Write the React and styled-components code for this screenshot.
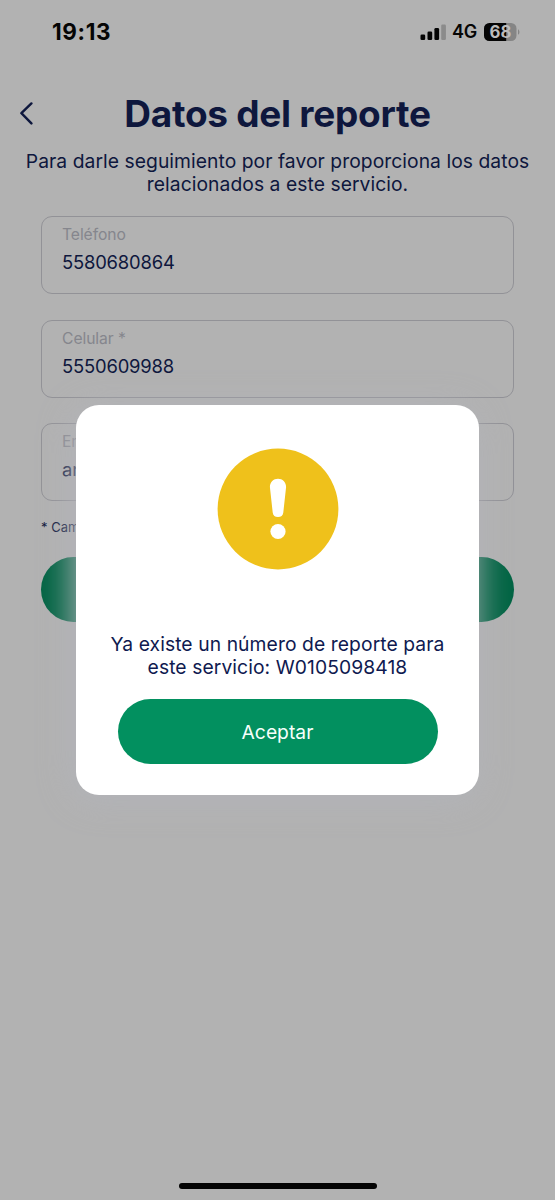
import styled, { createGlobalStyle } from "styled-components";

const GlobalStyle = createGlobalStyle`
    * {
        box-sizing: border-box;
    }

    body {
        margin: 0;
        background: #b2b2b2;
        font-family: Inter, "Liberation Sans", sans-serif;
    }
`;

const Screen = styled.div`
    position: relative;
    display: flex;
    flex-direction: column;
    width: 555px;
    height: 1200px;
    overflow: hidden;
    background: #b2b2b2;
    color: #0e173d;
`;

const StatusBar = styled.div`
    display: flex;
    align-items: center;
    justify-content: space-between;
    height: 64px;
    padding: 0 35px 0 52px;
    color: #050505;
`;

const Clock = styled.span`
    font-size: 22.5px;
    font-weight: 700;
    line-height: 26px;
    letter-spacing: 0.6px;
`;

const StatusIcons = styled.div`
    display: flex;
    align-items: center;
`;

const Network = styled.span`
    width: 32px;
    margin-left: 6px;
    font-size: 18px;
    font-weight: 600;
    line-height: 22px;
    letter-spacing: -0.2px;
`;

const Header = styled.header`
    display: grid;
    grid-template-columns: 54px 1fr 54px;
    align-items: center;
    height: 100px;
    margin-bottom: -14px;

    svg {
        margin-left: 19px;
    }
`;

const Title = styled.h1`
    margin: 0;
    text-align: center;
    font-size: 37px;
    font-weight: 700;
    line-height: 44px;
    letter-spacing: -0.27px;
    white-space: nowrap;
`;

const Subtitle = styled.p`
    margin: 0 0 20px;
    text-align: center;
    font-size: 19.3px;
    line-height: 23px;
    letter-spacing: 0.05px;
    white-space: nowrap;
`;

const Form = styled.main`
    display: flex;
    flex-direction: column;
    padding: 0 41px;
`;

const FieldBox = styled.div`
    display: flex;
    flex-direction: column;
    height: 78px;
    margin-bottom: 25.7px;
    padding: 8px 20px 6px;
    border: 1px solid #929297;
    border-radius: 11px;
`;

const FieldLabel = styled.label`
    color: #85868d;
    font-size: 15.7px;
    line-height: 20px;
    letter-spacing: -0.08px;
`;

const FieldValue = styled.span`
    margin-top: 5px;
    font-size: 18.4px;
    line-height: 24px;
    letter-spacing: -0.18px;
`;

const Note = styled.p`
    margin: -8px 0 22px;
    font-size: 13px;
    line-height: 16px;
`;

const SubmitButton = styled.button`
    height: 65px;
    border: 0;
    border-radius: 33px;
    background: #006443;
`;

const Overlay = styled.div`
    position: absolute;
    inset: 0;
    display: flex;
    align-items: center;
    justify-content: center;
`;

const Dialog = styled.section`
    display: flex;
    flex-direction: column;
    align-items: center;
    width: 403px;
    height: 390px;
    padding-top: 43px;
    border-radius: 23px;
    background: #fff;
    box-shadow: -3px 4px 34px 1px rgba(178, 179, 185, 0.95);
`;

const Message = styled.p`
    margin: 63px 0 20.4px;
    color: #0f1a50;
    text-align: center;
    font-size: 19.3px;
    line-height: 23px;
    letter-spacing: 0.08px;
    white-space: nowrap;
`;

const AcceptButton = styled.button`
    width: 320px;
    height: 65px;
    padding: 0;
    border: 0;
    border-radius: 33px;
    background: #02905f;
    color: #f5fffb;
    font-family: inherit;
    font-size: 19.3px;
`;

const HomeIndicator = styled.div`
    width: 198px;
    height: 6px;
    margin: auto auto 11px;
    border-radius: 3px;
    background: #030303;
`;

const SignalIcon = () => (
    <svg width="26" height="17" viewBox="0 0 26 17" fill="#050505">
        <rect x="0.5" y="10.5" width="4.7" height="5.5" rx="1.3" />
        <rect x="7.5" y="7.5" width="4.7" height="8.5" rx="1.3" />
        <rect x="14.4" y="4" width="4.7" height="12" rx="1.3" />
        <rect x="21.2" y="0.5" width="4.7" height="15.5" rx="1.3" fill="#8b8b8b" />
    </svg>
);

const BatteryIcon = () => (
    <svg width="36" height="18" viewBox="0 0 36 18">
        <defs>
            <clipPath id="battery-level">
                <rect width="22.2" height="18" />
            </clipPath>
        </defs>
        <rect width="32.5" height="18" rx="5.5" fill="#858585" />
        <rect width="32.5" height="18" rx="5.5" fill="#050505" clipPath="url(#battery-level)" />
        <path d="M34 6.2C35.9 7.2 35.9 10.8 34 11.8Z" fill="#858585" />
        <text
            x="16.4"
            y="14.8"
            textAnchor="middle"
            fill="#bcbcbc"
            fontFamily="Inter, sans-serif"
            fontSize="16.8"
            fontWeight="700"
        >
            68
        </text>
    </svg>
);

const BackIcon = () => (
    <svg width="16" height="24" viewBox="0 0 16 24" fill="none">
        <path
            d="M12.4 1.4L2.4 11.2L12.4 21.4"
            stroke="#0e173d"
            strokeWidth="2.4"
            strokeLinecap="round"
            strokeLinejoin="round"
        />
    </svg>
);

const WarningIcon = () => (
    <svg width="122" height="122" viewBox="0 0 122 122">
        <circle cx="61" cy="61" r="60.4" fill="#efc11b" />
        <path
            d="M52.9 39C52.9 34.3 56.5 30.8 61 30.8S69.1 34.3 69.1 39L66.3 64.5C66 67.5 64 69 61 69S56 67.5 55.7 64.5Z"
            fill="#fff"
        />
        <circle cx="61" cy="83.5" r="7.6" fill="#fff" />
    </svg>
);

const Field = ({ label, value }) => (
    <FieldBox>
        <FieldLabel>{label}</FieldLabel>
        <FieldValue>{value}</FieldValue>
    </FieldBox>
);

const App = () => {
    return (
        <>
            <GlobalStyle />
            <Screen>
                <StatusBar>
                    <Clock>19:13</Clock>
                    <StatusIcons>
                        <SignalIcon />
                        <Network>4G</Network>
                        <BatteryIcon />
                    </StatusIcons>
                </StatusBar>

                <Header>
                    <BackIcon />
                    <Title>Datos del reporte</Title>
                </Header>

                <Subtitle>
                    Para darle seguimiento por favor proporciona los datos
                    <br />
                    relacionados a este servicio.
                </Subtitle>

                <Form>
                    <Field label="Teléfono" value="5580680864" />
                    <Field label="Celular *" value="5550609988" />
                    <Field label="Email *" value="an" />
                    <Note>* Campos obligatorios</Note>
                    <SubmitButton type="button" aria-label="Continuar" />
                </Form>

                <HomeIndicator />

                <Overlay>
                    <Dialog role="dialog">
                        <WarningIcon />
                        <Message>
                            Ya existe un número de reporte para
                            <br />
                            este servicio: W0105098418
                        </Message>
                        <AcceptButton type="button">Aceptar</AcceptButton>
                    </Dialog>
                </Overlay>
            </Screen>
        </>
    );
};

export default App;
